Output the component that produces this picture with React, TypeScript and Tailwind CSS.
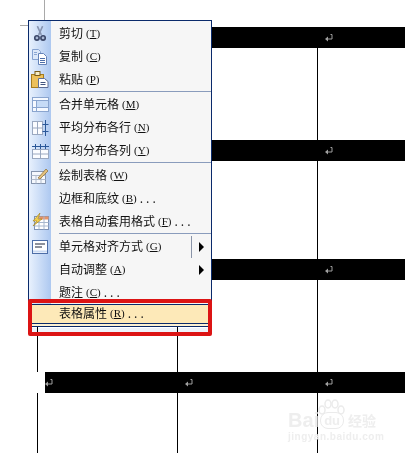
import React from 'react';

type Row = {
  label: string;
  hot: string;
  dots?: boolean;
  icon?: React.ReactNode;
  arrow?: boolean;
  split?: boolean;
  lineBelow?: boolean;
};

const ReturnMark = () => (
  <svg width="8" height="9" viewBox="0 0 8 9" className="mt-[7px]">
    <path d="M5.500 0.500h1.500v4.500H2" stroke="#a0a0a0" fill="none" />
    <path d="M3 2.500 0 5l3 2.500z" fill="#a0a0a0" />
  </svg>
);

const Scissors = () => (
  <svg width="14" height="16" viewBox="0 0 16 18">
    <path d="M5 0l4.500 10M11 0 6.500 10" stroke="#8794b0" strokeWidth="1.800" fill="none" />
    <circle cx="4.500" cy="13.500" r="2.500" stroke="#3a4668" strokeWidth="1.800" fill="#a9b8d4" />
    <circle cx="11.500" cy="13.500" r="2.500" stroke="#3a4668" strokeWidth="1.800" fill="#a9b8d4" />
  </svg>
);

const Copy = () => (
  <svg width="17" height="16" viewBox="0 0 17 16">
    <path d="M0.500 0.500h6l2 2v8h-8z" fill="#dce8f9" stroke="#86a3d1" />
    <path d="M6.500 4.500h5l3 3v8h-8z" fill="#fff" stroke="#6583b8" />
    <path d="M8 9.500h5M8 11.500h5M8 13.500h5" stroke="#4d6ea8" />
    <path d="M2 3.500h3M2 5.500h3" stroke="#8aa6d2" />
  </svg>
);

const Paste = () => (
  <svg width="18" height="18" viewBox="0 0 18 18">
    <rect x="0.500" y="3.500" width="12" height="13" fill="#ecc05a" stroke="#a67c1e" />
    <rect x="4" y="0.500" width="5" height="4" fill="#f7ecc4" stroke="#7a5c16" />
    <path d="M7.500 7.500h6l3.500 3v6h-9.500z" fill="#fff" stroke="#5f6f96" />
    <path d="M9.500 11.500h5M9.500 13.500h5" stroke="#42557e" />
  </svg>
);

const MergeCells = () => (
  <svg width="17" height="15" viewBox="0 0 17 15">
    <rect x="0.500" y="0.500" width="16" height="14" fill="#f5f9ff" stroke="#8aa5cf" />
    <rect x="4.500" y="3.500" width="12" height="7" fill="#c6dbf6" stroke="#8aa5cf" />
    <path d="M0.500 3.500h4M0.500 10.500h4M4.500 10.500v4" stroke="#8aa5cf" />
  </svg>
);

const DistributeRows = () => (
  <svg width="17" height="16" viewBox="0 0 17 16">
    <rect x="0.500" y="1.500" width="10" height="13" fill="#fbfcff" stroke="#9aa8c0" />
    <path d="M0.500 8h10M5.500 1.500v13" stroke="#9aa8c0" />
    <path d="M13.500 0v16M10.500 4.500h6M10.500 11.500h6" stroke="#2a5798" />
  </svg>
);

const DistributeCols = () => (
  <svg width="17" height="16" viewBox="0 0 17 16">
    <rect x="0.500" y="6.500" width="16" height="9" fill="#fbfcff" stroke="#9aa8c0" />
    <path d="M0.500 11h16M8.500 6.500v9" stroke="#9aa8c0" />
    <path d="M0 3.500h17M3.500 1v5M8.500 1v5M13.500 1v5" stroke="#2a5798" />
  </svg>
);

const DrawTable = () => (
  <svg width="18" height="18" viewBox="0 0 18 18">
    <rect x="0.500" y="4.500" width="14" height="12" fill="#f5f8fd" stroke="#8695ae" />
    <path d="M0.500 8.500h14M0.500 12.500h14M5 8.500v8M10 8.500v8" stroke="#b0bbcc" />
    <path d="M7 11l8-9 2 2-8 8z" fill="#e4c27e" stroke="#8a6c34" strokeWidth="0.700" />
  </svg>
);

const AutoFormat = () => (
  <svg width="17" height="17" viewBox="0 0 17 17">
    <rect x="2.500" y="3.500" width="14" height="13" fill="#fff" stroke="#7d92b6" />
    <rect x="7" y="3.500" width="9.500" height="3" fill="#e6946a" />
    <path d="M2.500 9.500h14M2.500 13h14M7 3.500v13M12 3.500v13" stroke="#a8b8ce" />
    <path d="M8 0 1 8h4l-4 5 9-7H6z" fill="#f2cf4e" stroke="#a07c1a" strokeWidth="0.600" />
  </svg>
);

const CellAlign = () => (
  <svg width="16" height="14" viewBox="0 0 16 14">
    <rect x="0.500" y="0.500" width="15" height="13" fill="#fff" stroke="#4d6ea8" />
    <path d="M3 4h10M3 7h7" stroke="#1c2438" strokeWidth="1.200" />
    <path d="M1 11.500h14" stroke="#c8d9f2" strokeWidth="2" />
  </svg>
);

const rows: Row[] = [
  { label: '剪切', hot: 'T', icon: <Scissors /> },
  { label: '复制', hot: 'C', icon: <Copy /> },
  { label: '粘贴', hot: 'P', icon: <Paste />, lineBelow: true },
  { label: '合并单元格', hot: 'M', icon: <MergeCells /> },
  { label: '平均分布各行', hot: 'N', icon: <DistributeRows /> },
  { label: '平均分布各列', hot: 'Y', icon: <DistributeCols />, lineBelow: true },
  { label: '绘制表格', hot: 'W', icon: <DrawTable /> },
  { label: '边框和底纹', hot: 'B', dots: true },
  { label: '表格自动套用格式', hot: 'F', dots: true, icon: <AutoFormat />, lineBelow: true },
  { label: '单元格对齐方式', hot: 'G', icon: <CellAlign />, arrow: true, split: true },
  { label: '自动调整', hot: 'A', arrow: true },
  { label: '题注', hot: 'C', dots: true },
];

const Label = ({ row }: { row: Row }) => (
  <div className="flex items-center whitespace-nowrap pb-[2px] text-[12px] leading-[14px] text-[#111]">
    <span>{row.label}</span>
    <span className="ml-[3px] font-['Liberation_Serif',serif] text-[11px]">
      (<span className="underline">{row.hot}</span>)
    </span>
    {row.dots && <span className="ml-[3px] tracking-[3px]">...</span>}
  </div>
);

const TableRow = ({ body }: { body: number }) => (
  <div>
    <div className="flex h-[21px] pl-[8px]">
      <div className="flex flex-1 bg-black">
        <div className="w-[140px]"><ReturnMark /></div>
        <div className="w-[140px]"><ReturnMark /></div>
        <div className="flex-1"><ReturnMark /></div>
      </div>
    </div>
    <div className="flex" style={{ height: body }}>
      <div className="w-[140px] border-l border-black" />
      <div className="w-[140px] border-l border-black" />
      <div className="flex-1 border-l border-black" />
    </div>
  </div>
);

const App: React.FC = () => {
  return (
    <div className="relative h-[453px] w-[405px] overflow-hidden bg-white font-['Noto_Sans_CJK_SC','Liberation_Sans',sans-serif]">
      {/* Document table */}
      <div className="pl-[37px] pt-[27px]">
        <TableRow body={92} />
        <TableRow body={98} />
        <TableRow body={92} />
        <TableRow body={60} />
      </div>

      {/* Page corner marks */}
      <div className="absolute left-[44px] top-0 h-[20px] w-px bg-[#a9a9a9]" />
      <div className="absolute left-[20px] top-[25px] h-px w-[8px] bg-[#a9a9a9]" />

      {/* Baidu watermark */}
      <div className="absolute left-[288px] top-[399px] w-[90px] text-[#eeeeee]">
        <svg width="27" height="21" viewBox="0 0 27 21" className="absolute left-[30px] top-0">
          <g fill="none" stroke="#ebebeb" strokeWidth="1.500">
            <ellipse cx="4" cy="11" rx="3" ry="4" />
            <ellipse cx="10" cy="5" rx="3" ry="4" />
            <ellipse cx="17" cy="5" rx="3" ry="4" />
            <ellipse cx="23" cy="11" rx="3" ry="4" />
          </g>
        </svg>
        <div className="mt-[11px] flex items-center font-bold">
          <span className="font-['Liberation_Sans',sans-serif] text-[20px] leading-[20px]">Bai</span>
          <span className="ml-[1px] rounded-[8px] border border-[#ebebeb] px-[3px] font-['Liberation_Sans',sans-serif] text-[13px] leading-[15px]">du</span>
          <span className="ml-[4px] text-[14px] leading-[20px]">经验</span>
        </div>
        <div className="mt-[1px] whitespace-nowrap font-['Liberation_Sans',sans-serif] text-[10px] font-bold leading-[12px] tracking-[0.5px]">jingyan.baidu.com</div>
      </div>

      {/* Context menu */}
      <div className="absolute left-[28px] top-[20px] w-[184px] border-x border-t border-[#0a2a6b] bg-[#f6f6f6]">
        <div className="flex flex-col bg-[linear-gradient(90deg,#e8f1fd_0px,#adc8f0_22px,#f6f6f6_22px)] pt-px">
          {rows.map((row) => (
            <React.Fragment key={row.label + row.hot}>
              <div className="flex h-[23px] items-center">
                <div className="flex w-[22px] shrink-0 items-center justify-center">{row.icon}</div>
                <div className="ml-[8px] flex-1"><Label row={row} /></div>
                {row.split && <div className="mr-[7px] h-[22px] w-px bg-[#8a94a8]" />}
                {row.arrow && (
                  <div className="mr-[7px] h-0 w-0 border-y-[5px] border-l-[5px] border-y-transparent border-l-black" />
                )}
              </div>
              {row.lineBelow && (
                <div className="h-[2px] pl-[30px]">
                  <div className="h-px bg-[#8a9cbc]" />
                </div>
              )}
            </React.Fragment>
          ))}
          <div className="border-t border-[#0a2a6b] bg-[#fde9b8] pl-[30px]">
            <div className="flex h-[18px] items-center"><Label row={{ label: '表格属性', hot: 'R', dots: true }} /></div>
          </div>
          <div className="h-[4px] border-y border-[#0a2a6b] bg-[#fdf1d2]" />
        </div>
      </div>

      {/* Red highlight */}
      <div className="absolute left-[28px] top-[299px] h-[37px] w-[184px] rounded-[2px] border-[4px] border-[#dc1414]">
        <div className="absolute bottom-0 left-0 h-[4px] w-full bg-[#eef3fb] mix-blend-multiply" />
      </div>
    </div>
  );
};

export default App;
